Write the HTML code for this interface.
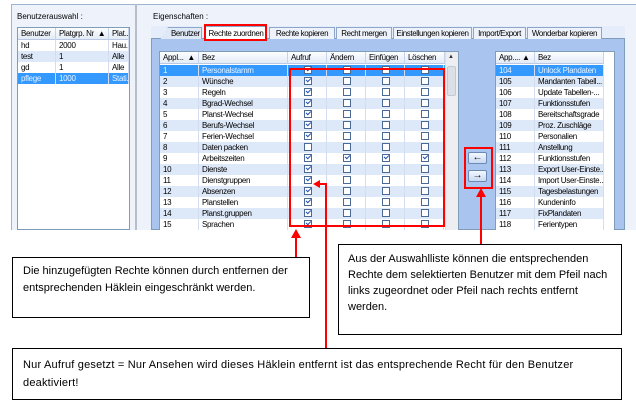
<!DOCTYPE html>
<html><head><meta charset="utf-8"><style>
*{margin:0;padding:0;box-sizing:border-box}
body{width:636px;height:407px;background:#fff;position:relative;overflow:hidden;font-family:"Liberation Sans",sans-serif;font-size:8px;color:#000}
.a{position:absolute;white-space:nowrap}
.t{letter-spacing:-0.4px;overflow:hidden}
.hdr{position:absolute;height:12px;background:linear-gradient(#fdfeff,#e3ebf7);border-bottom:1px solid #b9c9e3;}
.hc{position:absolute;top:0;height:12px;line-height:12px;padding-left:3px;border-right:1px solid #c5d3ea;white-space:nowrap;overflow:hidden;letter-spacing:-0.3px}
.row{position:absolute;height:11px;line-height:11px;white-space:nowrap}
.c{position:absolute;top:0;height:11px;padding-left:3px;border-right:1px solid #d3ddef;overflow:hidden;letter-spacing:-0.3px}
.cb{position:absolute;top:1px;width:8px;height:8px;border:1px solid #4a6a94;background:#fff}
.ck::after{content:"";position:absolute;left:1px;top:0px;width:4px;height:2px;border-left:1.3px solid #1f4fb0;border-bottom:1.3px solid #1f4fb0;transform:rotate(-45deg)}
.box{position:absolute;border:1px solid #000;background:#fff;font-size:11px;color:#000;white-space:nowrap}
.red{position:absolute;background:#f00}
</style></head><body>
<div class="a" style="left:11px;top:4px;width:124px;height:226px;background:#eef3fb;border-left:1px solid #9fb3d3;border-top:1px solid #9fb3d3"></div>
<div class="a" style="left:17px;top:12px;">Benutzerauswahl :</div>
<div class="a" style="left:17px;top:27px;width:113px;height:203px;background:#fff;border:1px solid #7f9db9"></div>
<div class="hdr" style="left:18px;top:28px;width:111px">
<div class="hc" style="left:0;width:38px">Benutzer</div><div class="hc" style="left:38px;width:53px">Platgrp. Nr &nbsp;&#9650;</div><div class="hc" style="left:91px;width:20px">Plat...</div></div>
<div class="row" style="left:18px;top:40px;width:111px;background:#fff"><div class="c" style="left:0;width:38px">hd</div><div class="c" style="left:38px;width:53px">2000</div><div class="c" style="left:91px;width:20px">Hau...</div></div>
<div class="row" style="left:18px;top:51px;width:111px;background:#dde8f9"><div class="c" style="left:0;width:38px">test</div><div class="c" style="left:38px;width:53px">1</div><div class="c" style="left:91px;width:20px">Alle</div></div>
<div class="row" style="left:18px;top:62px;width:111px;background:#fff"><div class="c" style="left:0;width:38px">gd</div><div class="c" style="left:38px;width:53px">1</div><div class="c" style="left:91px;width:20px">Alle</div></div>
<div class="row" style="left:18px;top:73px;width:111px;background:#3399ff;color:#e8f2ff"><div class="c" style="left:0;width:38px">pflege</div><div class="c" style="left:38px;width:53px">1000</div><div class="c" style="left:91px;width:20px">Stati...</div></div>
<div class="a" style="left:135px;top:4px;width:2px;height:226px;background:#b8bec8"></div>
<div class="a" style="left:137px;top:4px;width:499px;height:226px;background:#eef3fb;border-top:1px solid #9fb3d3"></div>
<div class="a" style="left:153px;top:12px;">Eigenschaften :</div>
<div class="a" style="left:151px;top:26px;width:474px;height:13px;background:#e4edf9"></div>
<div class="a" style="left:151px;top:38px;width:474px;height:192px;background:#a9c4ee;border:1px solid #7f9db9"></div>
<div class="a t" style="left:160px;top:27px;width:42px;height:12px;line-height:12px;padding-left:10px;background:#dfe8f6;border:1px solid #8ea6c9;border-bottom:none;clip-path:polygon(8px 0,100% 0,100% 100%,0 100%)">Benutzer</div>
<div class="a t" style="left:205px;top:26px;width:62px;height:14px;line-height:13px;text-align:center;background:#fff;border:1px solid #8ea6c9;border-bottom:none">Rechte zuordnen</div>
<div class="a t" style="left:269px;top:27px;width:66px;height:12px;line-height:12px;text-align:center;background:#eef3fb;border:1px solid #8ea6c9;border-bottom:none">Rechte kopieren</div>
<div class="a t" style="left:336px;top:27px;width:56px;height:12px;line-height:12px;text-align:center;background:#eef3fb;border:1px solid #8ea6c9;border-bottom:none">Recht mergen</div>
<div class="a t" style="left:393px;top:27px;width:79px;height:12px;line-height:12px;text-align:center;background:#eef3fb;border:1px solid #8ea6c9;border-bottom:none">Einstellungen kopieren</div>
<div class="a t" style="left:473px;top:27px;width:53px;height:12px;line-height:12px;text-align:center;background:#eef3fb;border:1px solid #8ea6c9;border-bottom:none">Import/Export</div>
<div class="a t" style="left:527px;top:27px;width:75px;height:12px;line-height:12px;text-align:center;background:#eef3fb;border:1px solid #8ea6c9;border-bottom:none">Wonderbar kopieren</div>
<div class="a" style="left:204px;top:24px;width:63px;height:17px;border:2px solid #f00"></div>
<div class="a" style="left:159px;top:51px;width:300px;height:179px;background:#fff;border:1px solid #7f9db9;border-bottom:none"></div>
<div class="hdr" style="left:160px;top:52px;width:285px">
<div class="hc" style="left:0;width:39px">Appl... &nbsp;&#9650;</div><div class="hc" style="left:39px;width:89px">Bez</div><div class="hc" style="left:128px;width:39px">Aufruf</div><div class="hc" style="left:167px;width:39px">Ändern</div><div class="hc" style="left:206px;width:39px">Einfügen</div><div class="hc" style="left:245px;width:40px">Löschen</div></div>
<div class="a" style="left:445px;top:52px;width:13px;height:178px;background:#eceef2;border-left:1px solid #dde"></div>
<div class="a" style="left:447px;top:66px;width:9px;height:30px;background:#dcdfe5;border:1px solid #c4c8d0;border-radius:2px"></div>
<div class="a" style="left:448px;top:54px;font-size:6px;color:#333">&#9650;</div>
<div id="g"></div>
<div class="a" style="left:289px;top:68px;width:156px;height:159px;border:2px solid #f00"></div>
<div class="a" style="left:468px;top:152px;width:19px;height:12px;background:linear-gradient(#f4f8ff,#c9d9f2);border:1px solid #6d8ab6;border-radius:2px;font-size:10px;line-height:9px;text-align:center">&#8592;</div>
<div class="a" style="left:468px;top:170px;width:19px;height:12px;background:linear-gradient(#f4f8ff,#c9d9f2);border:1px solid #6d8ab6;border-radius:2px;font-size:10px;line-height:9px;text-align:center">&#8594;</div>
<div class="a" style="left:464px;top:147px;width:29px;height:42px;border:2px solid #f00"></div>
<div class="a" style="left:495px;top:51px;width:120px;height:179px;background:#fff;border:1px solid #7f9db9;border-bottom:none"></div>
<div class="hdr" style="left:496px;top:52px;width:108px">
<div class="hc" style="left:0;width:39px">App.... &#9650;</div><div class="hc" style="left:39px;width:69px">Bez</div></div>
<div id="r"></div>
<div class="red" style="left:295px;top:236px;width:2px;height:22px"></div>
<div class="a" style="left:291px;top:229px;width:0;height:0;border-left:5px solid transparent;border-right:5px solid transparent;border-bottom:9px solid #f00"></div>
<div class="red" style="left:325px;top:183px;width:2px;height:165px"></div>
<div class="red" style="left:318px;top:183px;width:8px;height:2px"></div>
<div class="a" style="left:313px;top:180px;width:0;height:0;border-top:4px solid transparent;border-bottom:4px solid transparent;border-right:7px solid #f00"></div>
<div class="red" style="left:480px;top:195px;width:2px;height:49px"></div>
<div class="a" style="left:476px;top:188px;width:0;height:0;border-left:5px solid transparent;border-right:5px solid transparent;border-bottom:9px solid #f00"></div>
<div class="box" style="left:12px;top:257px;width:298px;height:61px;padding:5px 0 0 10px;line-height:17px">Die hinzugefügten Rechte können durch entfernen der<br>entsprechenden Häklein eingeschränkt werden.</div>
<div class="box" style="left:338px;top:244px;width:284px;height:91px;padding:6px 0 0 9px;line-height:16px">Aus der Auswahlliste können die entsprechenden<br>Rechte dem selektierten Benutzer mit dem Pfeil nach<br>links zugeordnet oder Pfeil nach rechts entfernt<br>werden.</div>
<div class="box" style="left:12px;top:348px;width:610px;height:52px;padding:7px 0 0 10px;line-height:18px;letter-spacing:0.2px">Nur Aufruf gesetzt = Nur Ansehen wird dieses Häklein entfernt ist das entsprechende Recht für den Benutzer<br>deaktiviert!</div>
<script>
var L=["Personalstamm","Wünsche","Regeln","Bgrad-Wechsel","Planst-Wechsel","Berufs-Wechsel","Ferien-Wechsel","Daten packen","Arbeitszeiten","Dienste","Dienstgruppen","Absenzen","Planstellen","Planst.gruppen","Sprachen"];
var h="";
for(var i=0;i<15;i++){var y=65+i*11;var sel=i==0;var bg=sel?"#3399ff":(i%2?"#dde8f9":"#fff");
h+='<div class="row" style="left:160px;top:'+y+'px;width:285px;background:'+bg+';'+(sel?'color:#e8f2ff':'')+'"><div class="c" style="left:0;width:39px">'+(i+1)+'</div><div class="c" style="left:39px;width:89px">'+L[i]+'</div>';
var xs=[144,183,222,261];
for(var k=0;k<4;k++){var chk=(k==0&&i!=7)||(i==8);h+='<div class="c" style="left:'+(128+k*39)+'px;width:39px;padding:0"></div><div class="cb'+(chk?' ck':'')+'" style="left:'+xs[k]+'px"></div>';}
h+='</div>';}
document.getElementById("g").innerHTML=h;
var R=["Unlock Plandaten","Mandanten Tabell...","Update Tabellen-...","Funktionsstufen","Bereitschaftsgrade","Proz. Zuschläge","Personalien","Anstellung","Funktionsstufen","Export User-Einste...","Import User-Einste...","Tagesbelastungen","Kundeninfo","FixPlandaten","Ferientypen"];
h="";
for(var i=0;i<15;i++){var y=65+i*11;var sel=i==0;var bg=sel?"#3399ff":(i%2?"#dde8f9":"#fff");
h+='<div class="row" style="left:496px;top:'+y+'px;width:108px;background:'+bg+';'+(sel?'color:#e8f2ff':'')+'"><div class="c" style="left:0;width:39px">'+(104+i)+'</div><div class="c" style="left:39px;width:69px">'+R[i]+'</div></div>';}
document.getElementById("r").innerHTML=h;
</script>
</body></html>
